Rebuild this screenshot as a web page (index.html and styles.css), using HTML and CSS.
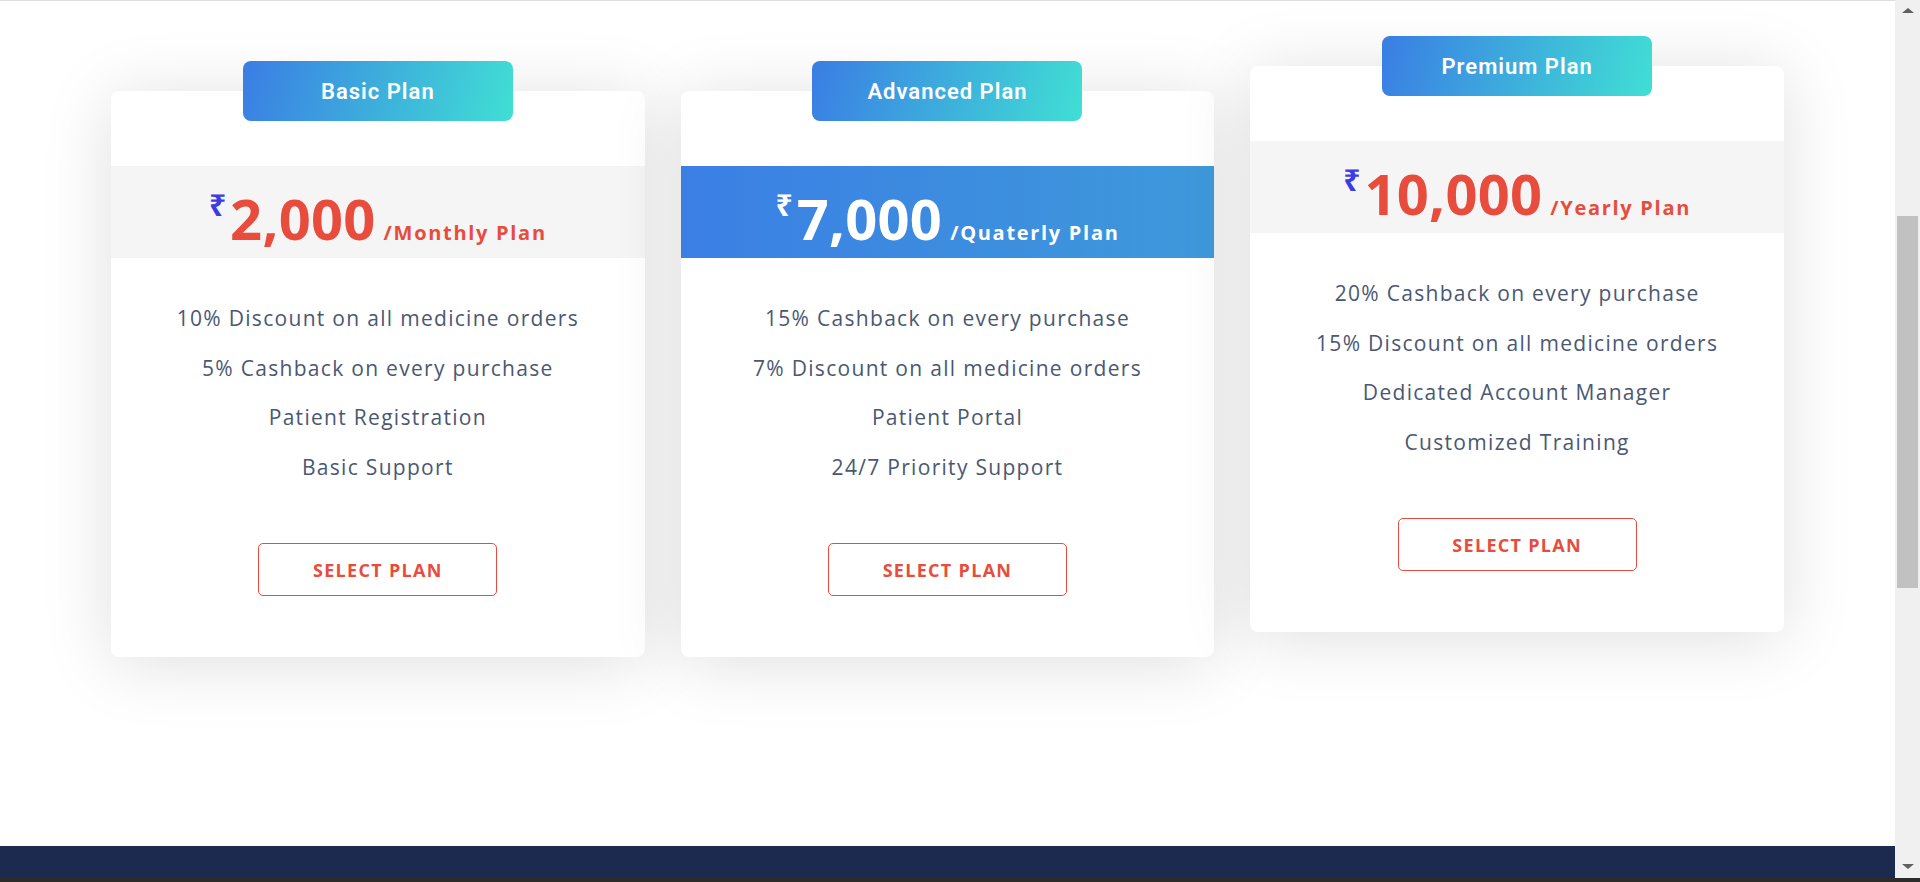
FILE: index.html
```html
<!DOCTYPE html>
<html lang="en">
<head>
<meta charset="utf-8">
<title>Pricing Plans</title>
<link rel="stylesheet" href="styles.css">
</head>
<body>
<div class="window">
  <div class="viewport">
    <main class="pricing">
      <div class="plans">
        <div class="plan">
          <div class="plan-badge">Basic Plan</div>
          <div class="plan-price">
            <span class="cur">₹</span><span class="amt">2,000</span><span class="per">/Monthly Plan</span>
          </div>
          <ul class="plan-features">
            <li>10% Discount on all medicine orders</li>
            <li>5% Cashback on every purchase</li>
            <li>Patient Registration</li>
            <li>Basic Support</li>
          </ul>
          <a class="plan-btn" href="#">SELECT PLAN</a>
        </div>
        <div class="plan plan-featured">
          <div class="plan-badge">Advanced Plan</div>
          <div class="plan-price">
            <span class="cur">₹</span><span class="amt">7,000</span><span class="per">/Quaterly Plan</span>
          </div>
          <ul class="plan-features">
            <li>15% Cashback on every purchase</li>
            <li>7% Discount on all medicine orders</li>
            <li>Patient Portal</li>
            <li>24/7 Priority Support</li>
          </ul>
          <a class="plan-btn" href="#">SELECT PLAN</a>
        </div>
        <div class="plan plan-raised">
          <div class="plan-badge">Premium Plan</div>
          <div class="plan-price">
            <span class="cur">₹</span><span class="amt">10,000</span><span class="per">/Yearly Plan</span>
          </div>
          <ul class="plan-features">
            <li>20% Cashback on every purchase</li>
            <li>15% Discount on all medicine orders</li>
            <li>Dedicated Account Manager</li>
            <li>Customized Training</li>
          </ul>
          <a class="plan-btn" href="#">SELECT PLAN</a>
        </div>
      </div>
    </main>
    <footer class="site-footer"></footer>
  </div>
  <div class="scrollbar">
    <span class="sb-arrow sb-up"></span>
    <div class="sb-track"><div class="sb-thumb"></div></div>
    <span class="sb-arrow sb-down"></span>
  </div>
</div>
<div class="taskbar"></div>
</body>
</html>
```

FILE: styles.css
```css
html, body {
  margin: 0;
  padding: 0;
  height: 882px;
  overflow: hidden;
  background: #ffffff;
}

body {
  font-family: "Open Sans", "Noto Sans", sans-serif;
}

.window {
  display: flex;
  height: 878px;
}

.viewport {
  flex: 1;
  display: flex;
  flex-direction: column;
  border-top: 1px solid #dedede;
  min-width: 0;
}

.pricing {
  flex: 1;
  padding-top: 90px;
}

.plans {
  width: 1673px;
  margin: 0 auto;
  display: grid;
  grid-template-columns: repeat(3, 1fr);
  column-gap: 36px;
  align-items: start;
}

.plan {
  display: flex;
  flex-direction: column;
  align-items: stretch;
  background: #ffffff;
  border-radius: 8px;
  box-shadow: 0 6px 70px rgba(0, 0, 0, 0.13);
  padding-bottom: 61px;
}

.plan-raised {
  transform: translateY(-25px);
}

.plan-badge {
  align-self: center;
  width: 270px;
  height: 60px;
  margin-top: -30px;
  border-radius: 8px;
  background: linear-gradient(105deg, #3a7de4, #40dfd4);
  color: #ffffff;
  font-family: Roboto, "Noto Sans", sans-serif;
  font-weight: 600;
  font-size: 22px;
  letter-spacing: 1px;
  display: flex;
  align-items: center;
  justify-content: center;
}

.plan-price {
  margin-top: 45px;
  height: 92px;
  box-sizing: border-box;
  padding-top: 24px;
  background: #f5f5f5;
  display: flex;
  justify-content: center;
  align-items: baseline;
  color: #e74c3c;
  font-weight: 700;
}

.cur {
  align-self: flex-start;
  font-family: "Open Sans", "Noto Sans", "DejaVu Sans", sans-serif;
  font-size: 30px;
  line-height: 1;
  color: #3c3ce4;
  margin-right: 4px;
}

.amt {
  font-size: 56px;
  line-height: 1;
  letter-spacing: 0.3px;
}

.per {
  font-size: 20px;
  line-height: 1;
  letter-spacing: 1.7px;
  margin-left: 8px;
}

.plan-featured .plan-price {
  background: linear-gradient(90deg, #3b7fe5, #3e99da);
  color: #ffffff;
}

.plan-featured .cur {
  color: #ffffff;
}

.plan-features {
  list-style: none;
  margin: 36px 0 0;
  padding: 0;
  text-align: center;
  color: #4a5873;
  font-size: 21px;
  letter-spacing: 1.3px;
}

.plan-features li {
  line-height: 49.5px;
}

.plan-btn {
  align-self: center;
  margin-top: 51px;
  width: 239px;
  height: 53px;
  box-sizing: border-box;
  border: 1px solid #e74c3c;
  border-radius: 5px;
  display: flex;
  align-items: center;
  justify-content: center;
  color: #e74c3c;
  text-decoration: none;
  font-weight: 700;
  font-size: 18px;
  letter-spacing: 1.3px;
}

.site-footer {
  height: 32px;
  background: #1b2a4e;
}

.scrollbar {
  width: 25px;
  background: #f0f0f0;
  display: flex;
  flex-direction: column;
  align-items: center;
}

.sb-arrow {
  width: 0;
  height: 0;
  border-left: 6px solid transparent;
  border-right: 6px solid transparent;
}

.sb-up {
  margin-top: 8px;
  border-bottom: 5px solid #606060;
}

.sb-down {
  margin-bottom: 9px;
  border-top: 5px solid #606060;
}

.sb-track {
  flex: 1;
  width: 100%;
  display: flex;
  justify-content: center;
}

.sb-thumb {
  width: 21px;
  height: 372px;
  margin-top: 203px;
  background: #c1c1c1;
}

.taskbar {
  height: 4px;
  background: #2e2c2b;
}
```
